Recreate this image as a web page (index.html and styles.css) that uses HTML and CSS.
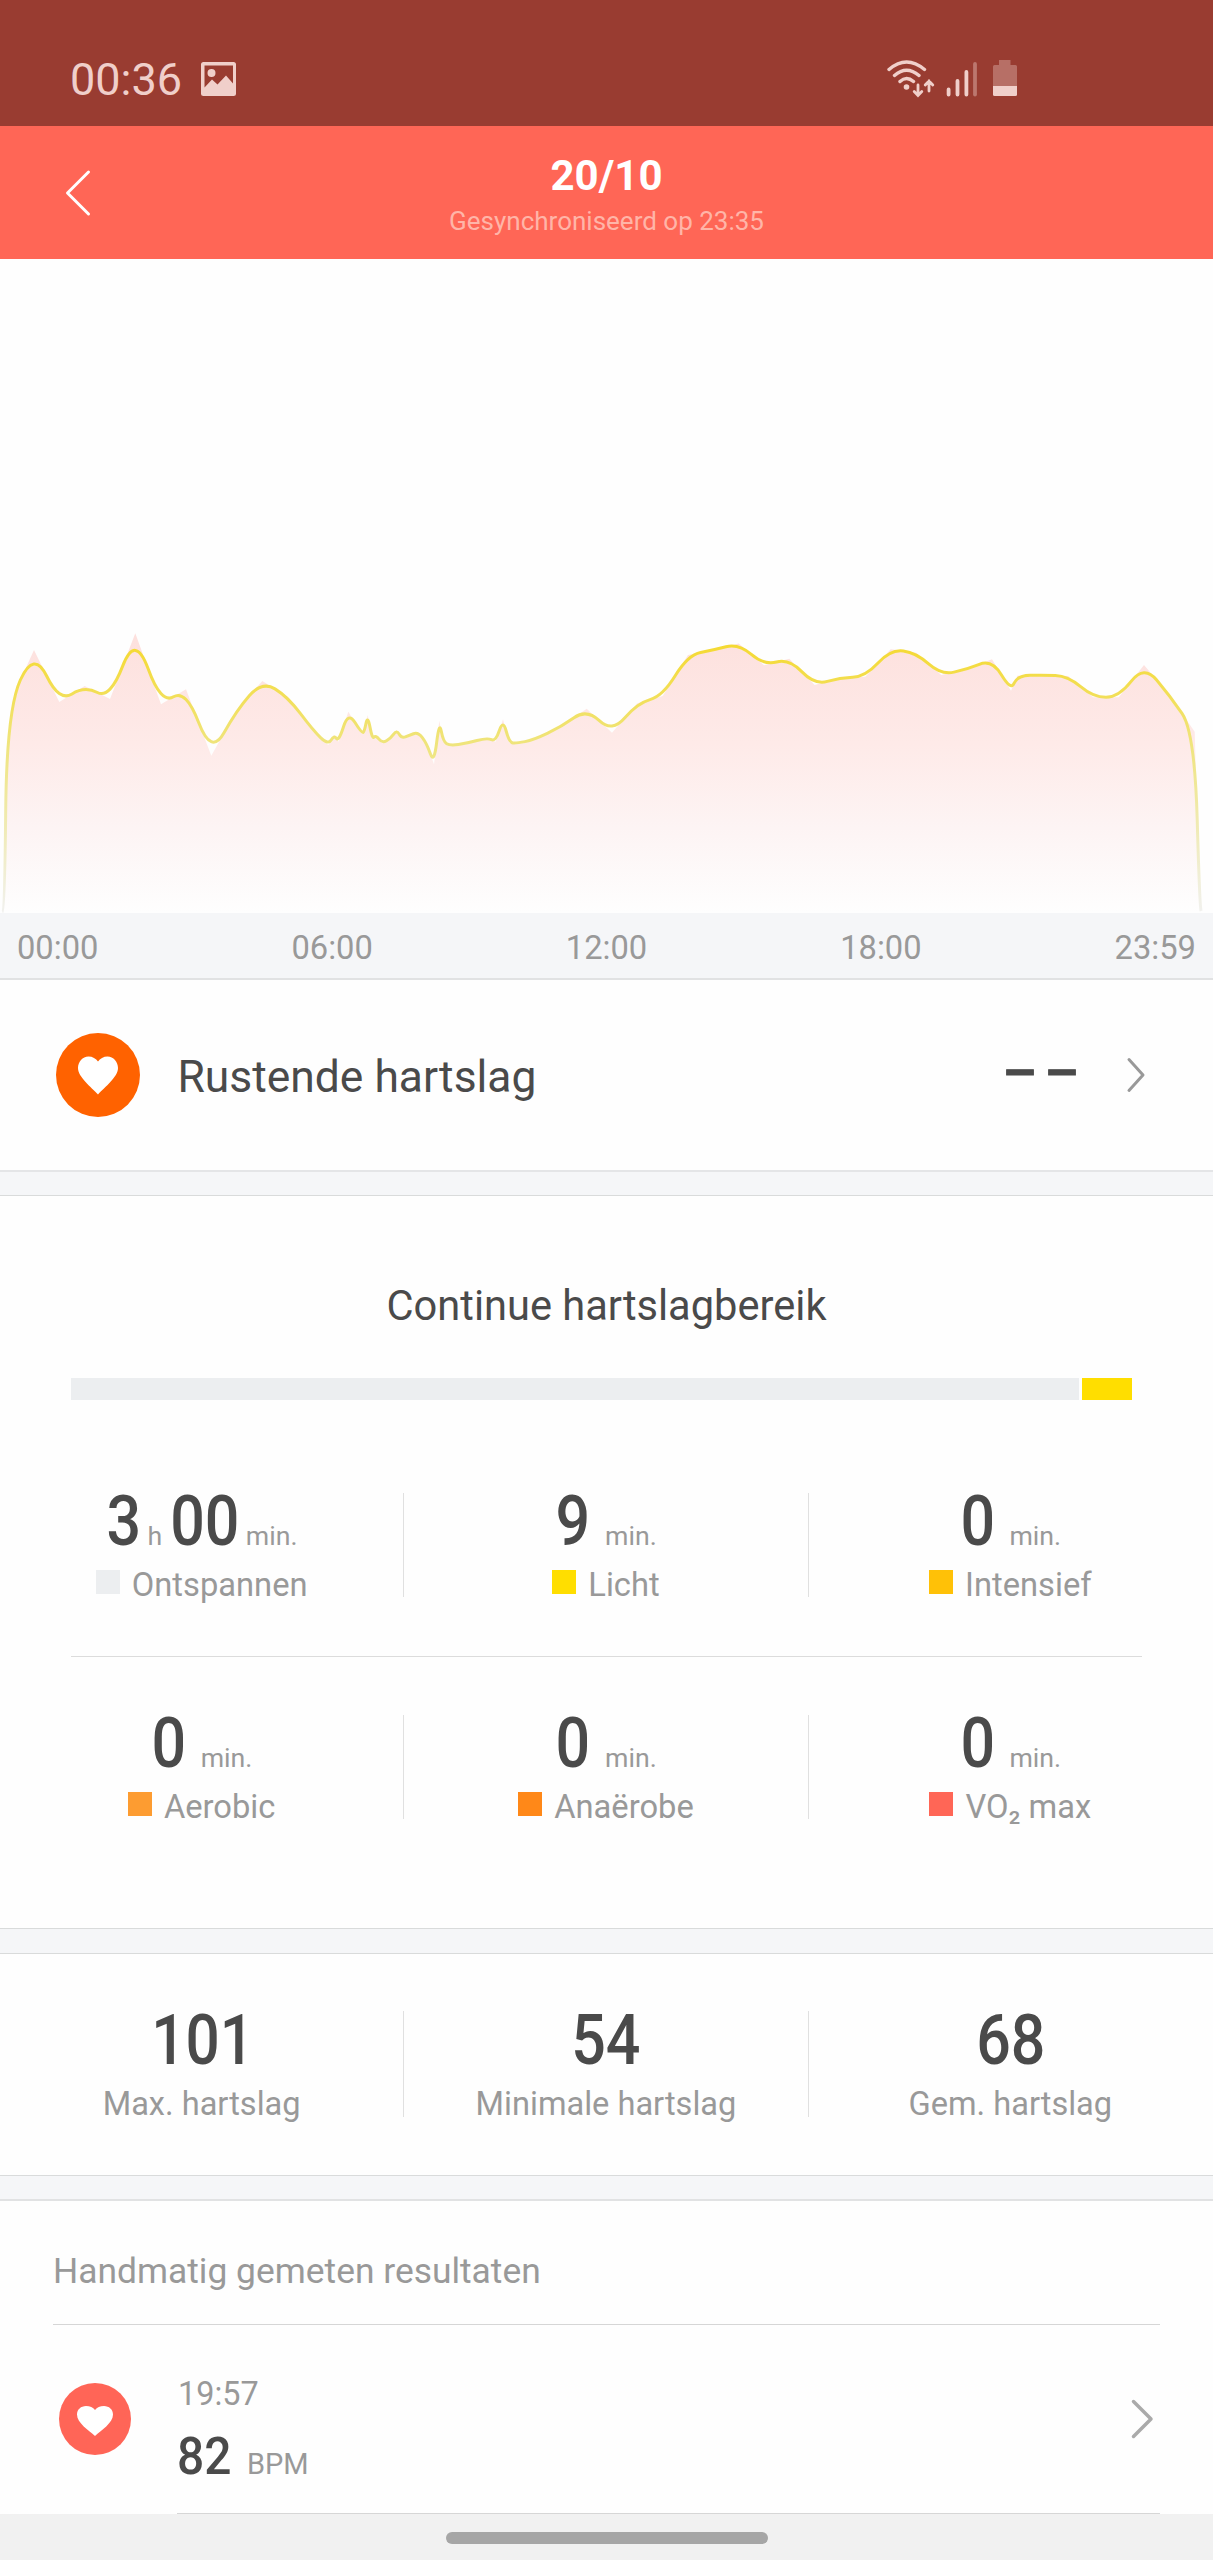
FILE: index.html
```html
<!DOCTYPE html>
<html lang="nl">
<head>
<meta charset="utf-8">
<title>Hartslag</title>
<link rel="stylesheet" href="styles.css">
</head>
<body>
<header class="status">
  <span class="clock">00:36</span>
  <svg class="photo" width="35" height="34" viewBox="0 0 35 34"><path fill="currentColor" fill-rule="evenodd" d="M2.500 0h30a2.500 2.500 0 0 1 2.500 2.500v29a2.500 2.500 0 0 1-2.500 2.500h-30A2.500 2.500 0 0 1 0 31.500v-29A2.500 2.500 0 0 1 2.500 0ZM3.500 3.500v22l7.500-8 5.500 5 8.500-9 7 8V3.500ZM10.500 7a4 4 0 1 1 0 8 4 4 0 0 1 0-8Z"/></svg>
  <svg class="signals" width="132" height="38" viewBox="0 0 132 38">
    <g fill="none" stroke="currentColor" stroke-width="3.400" stroke-linecap="round">
      <path d="M3 9.500Q20.500-5.500 38.500 9.500M8.500 15.500Q20.500 5 33 15.500M14 21.500Q20.500 15.500 27.500 21.500"/>
      <path stroke-width="2.800" d="M32 25v10M28.200 31.500l3.800 4 3.800-4M43 31V21M39.200 25l3.800-4 3.800 4"/>
      <path stroke-width="3.800" d="M62.600 29.500v5M71.500 21v13.500M80.400 12v22.500"/>
      <path stroke-width="3.800" opacity=".4" d="M89 4v30.500"/>
    </g>
    <circle cx="20.500" cy="27" r="2.800" fill="currentColor"/>
    <path fill="currentColor" opacity=".35" d="M113 0h11.500v5h5a1.500 1.500 0 0 1 1.500 1.500V26h-24V6.500A1.500 1.500 0 0 1 108.500 5h4.500Z"/>
    <path fill="currentColor" d="M107 26h24v8.500a1.500 1.500 0 0 1-1.500 1.500h-21a1.500 1.500 0 0 1-1.500-1.500Z"/>
  </svg>
</header>

<div class="appbar">
  <svg class="back" width="26" height="48" viewBox="0 0 26 48"><path d="M23.500 3 2.500 24 23.500 45"/></svg>
  <div class="titles">
    <h1>20/10</h1>
    <p>Gesynchroniseerd op 23:35</p>
  </div>
</div>

<svg class="chart" width="1213" height="654" viewBox="0 259 1213 654">
  <defs>
    <linearGradient id="area" gradientUnits="userSpaceOnUse" x1="0" y1="630" x2="0" y2="913">
      <stop offset="0" stop-color="#fde0dd"/><stop offset=".4" stop-color="#feeae8"/><stop offset=".7" stop-color="#fdf4f4"/><stop offset="1" stop-color="#fefefe"/>
    </linearGradient>
    <linearGradient id="stroke" gradientUnits="userSpaceOnUse" x1="0" y1="640" x2="0" y2="913">
      <stop offset="0" stop-color="#f5d92f"/><stop offset=".4" stop-color="#efe580"/><stop offset="1" stop-color="#f1f1ef"/>
    </linearGradient>
  </defs>
  <path id="area-path" fill="url(#area)"/>
  <path id="line-path" fill="none" stroke="url(#stroke)" stroke-width="3"/>
</svg>
<div class="axis"><span>00:00</span><span>06:00</span><span>12:00</span><span>18:00</span><span>23:59</span></div>

<section class="resting">
  <svg width="84" height="84" viewBox="0 0 84 84"><circle cx="42" cy="42" r="42" fill="#ff6200"/><path fill="#fff" d="M42 61.500C35 54 22 44 22 35c0-6 4.500-11.500 10.500-11.500 4 0 7.500 2 9.500 5 2-3 5.500-5 9.500-5C57.500 23.500 62 29 62 35c0 9-13 19-20 26.500Z"/></svg>
  <span class="resting-name">Rustende hartslag</span>
  <span class="dashes">––</span>
  <svg class="chev" width="20" height="36" viewBox="0 0 20 36"><path d="M3 2.500 17 18 3 33.500"/></svg>
</section>
<div class="gap gap-first"></div>

<section class="ranges">
  <h2>Continue hartslagbereik</h2>
  <div class="bar"><i class="relax"></i><i class="light"></i></div>
  <div class="cells">
    <div class="cell"><div class="value"><b class="n1">3</b><small class="hour">h</small><b class="n2">00</b><small class="tight">min.</small></div><div class="label"><i class="relax"></i><span>Ontspannen</span></div></div>
    <div class="cell"><div class="value"><b class="n1">9</b><small>min.</small></div><div class="label"><i class="light"></i><span>Licht</span></div></div>
    <div class="cell"><div class="value"><b class="n1">0</b><small>min.</small></div><div class="label"><i class="intense"></i><span>Intensief</span></div></div>
  </div>
  <hr>
  <div class="cells">
    <div class="cell"><div class="value"><b class="n1">0</b><small>min.</small></div><div class="label"><i class="aerobic"></i><span>Aerobic</span></div></div>
    <div class="cell"><div class="value"><b class="n1">0</b><small>min.</small></div><div class="label"><i class="anaerobic"></i><span>Anaërobe</span></div></div>
    <div class="cell"><div class="value"><b class="n1">0</b><small>min.</small></div><div class="label"><i class="vo2"></i><span>VO₂ max</span></div></div>
  </div>
</section>
<div class="gap"></div>

<section class="summary cells">
  <div class="cell"><b class="n3">101</b><span>Max. hartslag</span></div>
  <div class="cell"><b class="n2">54</b><span>Minimale hartslag</span></div>
  <div class="cell"><b class="n2">68</b><span>Gem. hartslag</span></div>
</section>
<div class="gap gap-last"></div>

<section class="manual">
  <h3>Handmatig gemeten resultaten</h3>
  <div class="item">
    <svg class="badge" width="72" height="72" viewBox="0 0 72 72"><circle cx="36" cy="36" r="36" fill="#ff6557"/><path fill="#fff" d="M36 53C30 47.500 18 40 18 31.500c0-5 4-8.500 9-8.500 4 0 7 1.500 9 4 2-2.500 5-4 9-4 5 0 9 3.500 9 8.500C54 40 42 47.500 36 53Z"/></svg>
    <div class="reading">
      <time>19:57</time>
      <div class="bpm"><b>82</b><small>BPM</small></div>
      <svg class="item-chev" width="24" height="42" viewBox="0 0 24 42"><path d="M3.500 3.500 21 21 3.500 38.500"/></svg>
    </div>
  </div>
</section>
<footer class="nav"><i></i></footer>
<script src="chart.js"></script>
</body>
</html>
```
FILE: chart.js
```js
// Samples as [x, y]; the area joins them directly, the line runs smoothly between their midpoints.
const samples = [
  [0, 913], [4.7, 911], [6.7, 710], [34, 650], [59.3, 702], [84.7, 686], [110, 699], [135.3, 633.3],
  [161, 704.3], [186, 689.3], [211.3, 755.7], [236.7, 710], [262.3, 681], [287.7, 696.7], [313.3, 730.7],
  [328.3, 745], [334, 735], [338.7, 741.7], [348.3, 711.7], [361.7, 733.3], [364.3, 731.7], [367.7, 715],
  [372.3, 739.3], [375.7, 735], [382.3, 743.3], [390.7, 738.3], [396.7, 730], [401.7, 738.3], [409, 735.5],
  [418, 732], [426.7, 743.3], [434, 764.3], [439.3, 720.7], [443.3, 741.7], [450, 745.7], [466.7, 743.3],
  [487.3, 737.7], [495.7, 741.7], [503, 719.3], [509.3, 742.7], [516.7, 743.3], [533.3, 740], [561.3, 726.7],
  [586.7, 708.7], [612, 732.7], [637.3, 703.3], [662.7, 696], [688, 655], [713.3, 650], [738.7, 643.5],
  [764, 665.3], [789.3, 658.7], [814.7, 685], [840, 677.7], [865.3, 676.7], [890.7, 649.3], [916, 652.7],
  [941.3, 675], [966.7, 669.3], [992, 659.3], [1011, 690.7], [1017.3, 675.7], [1042.7, 675], [1068, 676],
  [1093.3, 697.3], [1118.7, 697.3], [1144, 665], [1169.3, 695], [1194.7, 731.7], [1199.7, 907], [1202.5, 915]
];
// The area's left edge follows the rising line instead of its control samples.
const leftEdge = [[4, 912], [6, 810], [7.5, 750], [11, 715], [20, 681]];

const mid = (a, b) => [(a[0] + b[0]) / 2, (a[1] + b[1]) / 2];
let line = "M" + mid(samples[0], samples[1]);
for (let i = 1; i < samples.length - 1; i++) {
  line += "Q" + samples[i] + " " + mid(samples[i], samples[i + 1]);
}
document.getElementById("line-path").setAttribute("d", line);
document.getElementById("area-path").setAttribute("d", "M" + leftEdge.concat(samples.slice(3)).join("L") + "Z");
```
FILE: styles.css
```css
* { box-sizing: border-box; margin: 0; padding: 0; }
body { width: 1213px; height: 2560px; background: #fefefe; font-family: Roboto, "Liberation Sans", sans-serif; color: #4a4a4a; }
svg { display: block; flex: none; }
i { display: block; font-style: normal; }

.status { display: flex; align-items: flex-start; height: 126px; padding: 57px 195px 0 70px; background: #993c31; color: #f0cfca; }
.clock { font-size: 45px; line-height: 46px; width: 131px; }
.photo { margin-top: 5px; }
.signals { margin: 3px 0 0 auto; }

.appbar { display: grid; grid-template-columns: 66px 1fr 66px; height: 133px; background: #ff6656; color: #fff; }
.back { margin: 43px 0 0 65px; fill: none; stroke: #fff; stroke-width: 3; stroke-linecap: round; stroke-linejoin: round; }
.titles { text-align: center; padding-top: 25px; }
.titles h1 { font-size: 42px; font-weight: 700; line-height: 50px; }
.titles p { font-size: 26px; line-height: 30px; margin-top: 5px; color: #ffb5a8; }

.axis { display: flex; justify-content: space-between; height: 67px; padding: 0 17px; background: #f5f6f8; border-bottom: 2px solid #e1e2e3; font-size: 32.7px; line-height: 70px; color: #999; }

.resting { display: flex; align-items: center; height: 190px; padding: 0 67px 0 56px; }
.resting-name { margin: 3px 0 0 37.5px; font-size: 44.4px; }
.dashes { margin-left: auto; padding-bottom: 14px; font: 700 54px/54px "Liberation Sans", sans-serif; letter-spacing: 12px; -webkit-text-stroke: 1px #4a4a4a; }
.chev { margin-left: 37px; }
.chev, .item-chev { fill: none; stroke: #999; stroke-width: 3; stroke-linecap: round; stroke-linejoin: round; }

.gap { height: 26px; background: #f5f6f8; border-top: 1px solid #d9dbdb; border-bottom: 1px solid #d9dbdb; }
.gap-first { border-top: 2px solid #e4e5e7; }
.gap-last { border-bottom: 2px solid #e1e2e3; }

.ranges { height: 732px; padding-top: 85px; }
.ranges h2 { font-size: 41.6px; font-weight: 400; line-height: 50px; text-align: center; }
.bar { display: flex; gap: 3px; width: 1061px; height: 22px; margin: 47px 0 93px 71px; }
.bar .relax { flex: 1; }
.bar .light { width: 50px; }
.relax { background: #eceef0; }
.light { background: #ffde00; }
.intense { background: #ffc107; }
.aerobic { background: #fd9c31; }
.anaerobic { background: #ff8818; }
.vo2 { background: #ff6656; }

.cells { display: grid; grid-template-columns: repeat(3, 1fr); }
.cell { display: flex; flex-direction: column; align-items: center; height: 104px; border-right: 1px solid #e0e0e0; }
.cell:last-child { border-right-color: transparent; }
.value { display: flex; align-items: baseline; height: 56px; line-height: 56px; }
.cell b { font-size: 70px; font-weight: 500; transform: scaleX(.87); }
.n1 { margin: 0 -2px; }
.n2 { margin: 0 -5px; }
.cell .n3 { margin: 0 -7px 0 -4px; transform: scaleX(.86); }
.value small { margin-left: 14px; font-size: 26.7px; color: #999; }
.value .hour { margin: 0 8px 0 6px; }
.value .tight { margin-left: 6px; }
.label { display: flex; margin-top: 21px; font-size: 32.7px; line-height: 30px; color: #999; }
.label i { width: 24px; height: 24px; margin-right: 12px; }
hr { width: 1071px; height: 1px; margin: 59px 0 58px 71px; border: 0; background: #dcdcdc; }

.summary { height: 221px; padding-top: 57px; }
.summary .cell { height: 106px; }
.summary b { line-height: 58px; }
.summary span { margin-top: 20px; font-size: 32.6px; line-height: 30px; color: #999; }

.manual { height: 313px; padding: 50px 53px 0; }
.manual h3 { height: 74px; border-bottom: 1px solid #d6d6d6; font-size: 35.4px; line-height: 40px; font-weight: 400; color: #999; }
.item { display: flex; height: 189px; padding-left: 6px; }
.badge { margin-top: 58px; }
.reading { flex: 1; display: grid; grid-template-columns: 1fr auto; grid-template-rows: 36px 52px; row-gap: 19px; margin-left: 46px; padding: 51px 6px 0 0; border-bottom: 1px solid #d6d6d6; color: #999; }
.reading time { padding-left: 1px; font-size: 32.4px; line-height: 36px; }
.bpm { grid-row: 2; display: flex; align-items: baseline; line-height: 52px; }
.bpm b { width: 57px; font-size: 51.5px; font-weight: 500; color: #4a4a4a; transform: scaleX(.93); transform-origin: left; }
.bpm small { margin-left: 13px; font-size: 29px; }
.item-chev { grid-column: 2; grid-row: 1 / 3; margin-top: 22px; stroke: #aaa; stroke-width: 3.5; }

.nav { height: 46px; padding-top: 18px; background: #f1f1f1; }
.nav i { width: 322px; height: 12px; margin: 0 auto; border-radius: 6px; background: #a6a6a6; }
```
